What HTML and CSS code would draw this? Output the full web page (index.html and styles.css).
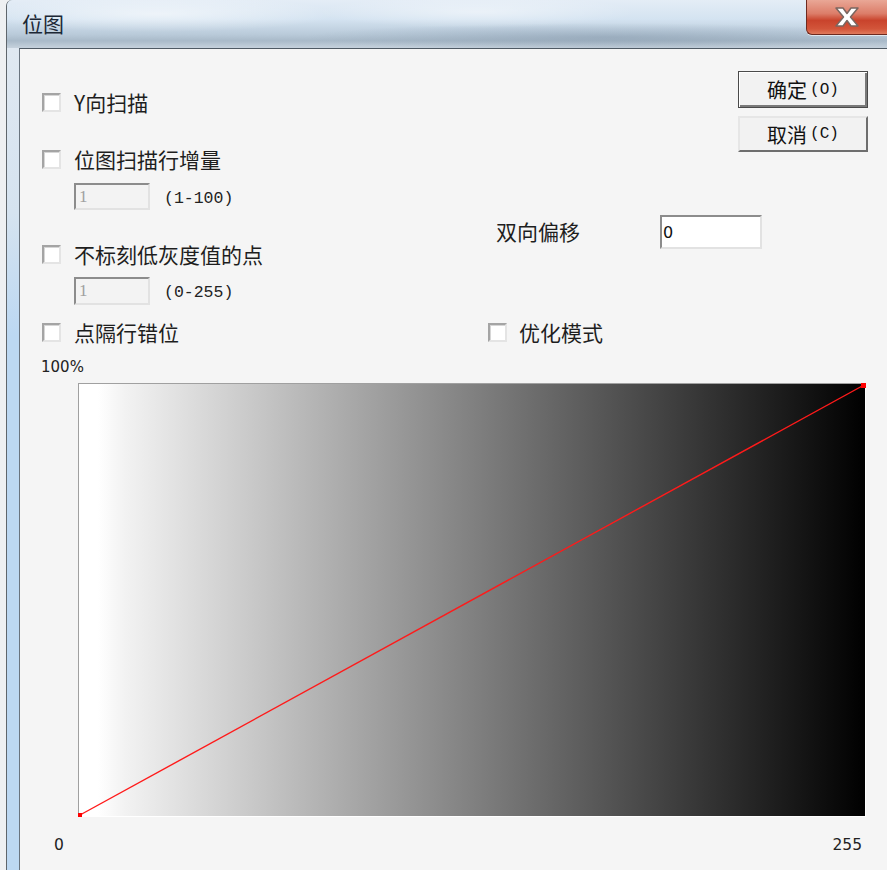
FILE: index.html
```html
<!DOCTYPE html>
<html lang="zh">
<head>
<meta charset="utf-8">
<title>位图</title>
<link rel="stylesheet" href="styles.css">
</head>
<body>
<div class="window">
  <div class="titlebar">
    <span class="title">位图</span>
    <div class="close">
      <svg width="28" height="22" viewBox="0 0 28 22">
        <path d="M3 2 L10 2 L14 7.5 L18 2 L25 2 L17.5 11 L25 20 L18 20 L14 14.5 L10 20 L3 20 L10.5 11 Z" fill="#ffffff" stroke="#7a6660" stroke-width="1.5" stroke-linejoin="round"/>
      </svg>
    </div>
  </div>
  <div class="frame">
    <div class="client">
      <div class="top">
        <div class="left-col">
          <div class="check row-a"><span class="box"></span><span class="lbl">Y向扫描</span></div>
          <div class="check row-b"><span class="box"></span><span class="lbl">位图扫描行增量</span></div>
          <div class="field row-c"><span class="input disabled">1</span><span class="range">(1-100)</span></div>
          <div class="check row-d"><span class="box"></span><span class="lbl">不标刻低灰度值的点</span></div>
          <div class="field row-e"><span class="input disabled">1</span><span class="range">(0-255)</span></div>
          <div class="check row-f"><span class="box"></span><span class="lbl">点隔行错位</span></div>
        </div>
        <div class="right-col">
          <div class="buttons">
            <div class="btn default">确定<span class="acc">(O)</span></div>
            <div class="btn second">取消<span class="acc">(C)</span></div>
          </div>
          <div class="offset">
            <span class="lbl offset-lbl">双向偏移</span>
            <span class="input white">0</span>
          </div>
          <div class="check opt"><span class="box"></span><span class="lbl">优化模式</span></div>
        </div>
      </div>
      <div class="chart-area">
        <div class="pct">100%</div>
        <svg class="chart" width="788" height="434" viewBox="0 0 788 434">
          <defs>
            <linearGradient id="g" x1="0" y1="0" x2="1" y2="0">
              <stop offset="0" stop-color="#ffffff"/>
              <stop offset="0.025" stop-color="#ffffff"/>
              <stop offset="0.06" stop-color="#f2f2f2"/>
              <stop offset="1" stop-color="#000000"/>
            </linearGradient>
          </defs>
          <rect x="0" y="0" width="788" height="434" fill="url(#g)"/>
          <line x1="0" y1="0.5" x2="788" y2="0.5" stroke="#a0a0a0" stroke-width="1"/>
          <line x1="0.5" y1="0" x2="0.5" y2="434" stroke="#a0a0a0" stroke-width="1"/>
          <line x1="0" y1="433.5" x2="788" y2="433.5" stroke="#ffffff" stroke-width="1"/>
          <line x1="787.5" y1="0" x2="787.5" y2="434" stroke="#ffffff" stroke-width="1"/>
          <line x1="2" y1="432" x2="786" y2="2" stroke="#ff1a1a" stroke-width="1.4"/>
          <rect x="0" y="430" width="4" height="4" fill="#ff0000"/>
          <rect x="783" y="0" width="5" height="5" fill="#ff0000"/>
        </svg>
        <div class="axis"><span>0</span><span>255</span></div>
      </div>
    </div>
  </div>
</div>
</body>
</html>
```

FILE: styles.css
```css
html, body {
  margin: 0;
  padding: 0;
}
body {
  background: #eef0f2;
  width: 887px;
  height: 870px;
  overflow: hidden;
  font-family: "Noto Sans CJK SC", "DejaVu Sans", sans-serif;
}
.window {
  margin-left: 6px;
  height: 870px;
  border-left: 1px solid #5f666c;
  display: flex;
  flex-direction: column;
  border-top-left-radius: 6px;
  background: #d4e3f1;
}
.titlebar {
  height: 48px;
  flex: none;
  display: flex;
  justify-content: space-between;
  align-items: flex-start;
  padding-left: 15px;
  border-top-left-radius: 6px;
  background:
    radial-gradient(ellipse 180px 18px at 150px 14px, rgba(255,255,255,0.55), rgba(255,255,255,0)),
    radial-gradient(ellipse 160px 16px at 470px 12px, rgba(255,255,255,0.45), rgba(255,255,255,0)),
    radial-gradient(ellipse 300px 14px at 600px 37px, rgba(120,140,160,0.4), rgba(120,140,160,0)),
    linear-gradient(180deg, #e4edf6 0%, #d4e3f1 40%, #b9cad9 72%, #a9bac9 85%, #c6d2dd 100%);
}
.title {
  margin-top: 9px;
  font-size: 21px;
  line-height: 28px;
  color: #1c2836;
}
.close {
  width: 80px;
  height: 34px;
  border: 1px solid #6e2a1f;
  border-top: none;
  border-right: none;
  border-bottom-left-radius: 6px;
  background: linear-gradient(180deg, #e9a796 0%, #dc7d69 40%, #c9432c 60%, #d2553a 85%, #e07a5c 100%);
  display: flex;
  align-items: center;
  justify-content: center;
  box-shadow: 0 1px 0 rgba(255,255,255,0.6);
}
.frame {
  flex: 1;
  display: flex;
  padding-left: 12px;
  background: linear-gradient(180deg, #dfe8f1 0%, #d5e3f0 20%, #bcd8f2 35%, #bcd8f2 100%);
}
.client {
  flex: 1;
  border-left: 1px solid #69747f;
  border-top: 1px solid #4f5a64;
  background: #f5f5f5;
  display: flex;
  flex-direction: column;
}
.top {
  display: flex;
}
.left-col {
  width: 468px;
  padding-left: 22px;
  box-sizing: border-box;
  display: flex;
  flex-direction: column;
}
.right-col {
  width: 380px;
  display: flex;
  flex-direction: column;
  padding-top: 22px;
}
.check {
  height: 30px;
  display: flex;
  align-items: center;
}
.box {
  width: 19px;
  height: 19px;
  box-sizing: border-box;
  border: 2px solid;
  border-color: #a4a4a4 #e4e4e4 #e4e4e4 #a4a4a4;
  background: #ffffff;
  box-shadow: inset 1px 1px 0 #d6d6d6;
  flex: none;
}
.lbl {
  margin-left: 13px;
  font-size: 21px;
  line-height: 30px;
  color: #1e1e1e;
  white-space: nowrap;
}
.row-a { margin-top: 38px; }
.row-b { margin-top: 27px; }
.row-c { margin-top: 9px; height: 27px; }
.row-d { margin-top: 29px; }
.row-e { margin-top: 8px; height: 28px; }
.row-f { margin-top: 12px; }
.field {
  display: flex;
  align-items: stretch;
  padding-left: 32px;
}
.input {
  box-sizing: border-box;
  border: 2px solid;
  border-color: #8c8c8c #e2e2e2 #e2e2e2 #8c8c8c;
  display: flex;
  align-items: center;
  padding-left: 3px;
  font-family: "Liberation Serif", serif;
  font-size: 17px;
}
.input.disabled {
  width: 76px;
  background: #f3f3f3;
  color: #a0a0a0;
}
.range {
  margin-left: 14px;
  display: flex;
  align-items: center;
  font-family: "Liberation Mono", "DejaVu Sans Mono", monospace;
  font-size: 16.5px;
  color: #222;
  padding-top: 3px;
}
.buttons {
  display: flex;
  flex-direction: column;
  align-items: flex-end;
  gap: 8px;
}
.btn {
  width: 130px;
  box-sizing: border-box;
  display: flex;
  align-items: center;
  justify-content: center;
  font-size: 20px;
  color: #111;
  background: #f2f2f2;
}
.btn .acc {
  font-family: "Liberation Mono", monospace;
  font-size: 16px;
  margin-left: 3px;
}
.btn.default {
  height: 37px;
  border: 1px solid #4a4a4a;
  box-shadow: inset 1px 1px 0 #ffffff, inset -2px -2px 0 #7a7a7a;
}
.btn.second {
  height: 36px;
  border: 2px solid;
  border-color: #e6e6e6 #6e6e6e #6e6e6e #e6e6e6;
}
.offset {
  margin-top: 63px;
  height: 34px;
  display: flex;
  align-items: stretch;
}
.offset-lbl {
  margin-left: 8px;
  width: 164px;
  display: flex;
  align-items: center;
  padding-bottom: 2px;
}
.input.white {
  width: 102px;
  background: #ffffff;
  color: #111;
  font-family: "DejaVu Sans", sans-serif;
  font-size: 16px;
  padding-left: 1px;
}
.opt {
  margin-top: 68px;
}
.opt .lbl { margin-left: 12px; }
.chart-area {
  display: flex;
  flex-direction: column;
}
.pct {
  margin-top: 10px;
  margin-left: 21px;
  height: 20px;
  line-height: 20px;
  font-family: "DejaVu Sans", sans-serif;
  font-size: 15px;
  color: #222;
}
.chart {
  display: block;
  margin-top: 6px;
  margin-left: 58px;
}
.axis {
  margin-top: 18px;
  margin-left: 34px;
  width: 808px;
  display: flex;
  justify-content: space-between;
  font-family: "DejaVu Sans", sans-serif;
  font-size: 15.5px;
  line-height: 20px;
  color: #222;
}
```
